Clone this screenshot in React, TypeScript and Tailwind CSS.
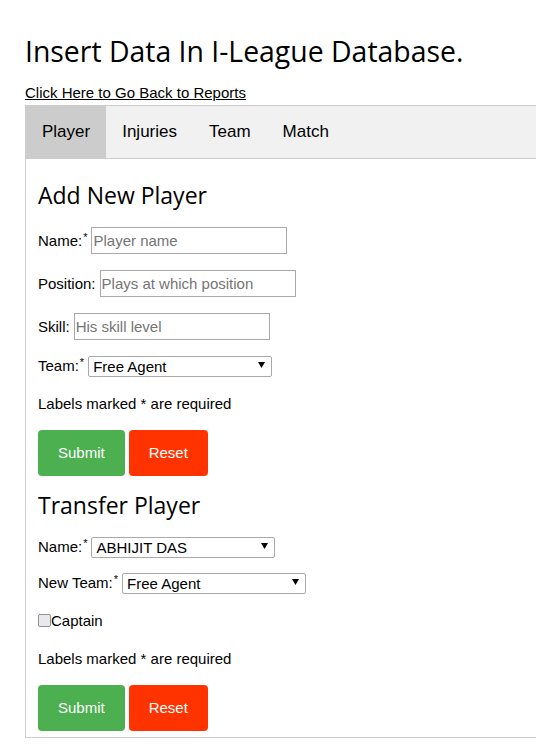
import React from "react";

const body = "font-['Liberation_Sans',Arial,sans-serif]";
const heading = "font-['Open_Sans','Noto_Sans',sans-serif]";

function Req() {
	return <sup className="ml-[1px] text-[11px]">*</sup>;
}

function Select({ value, width }: { value: string; width: string }) {
	return (
		<div className={`relative h-[21px] ${width}`}>
			<select
				defaultValue={value}
				className={`${body} h-full w-full appearance-none rounded-[2px] border border-[#a9a9a9] bg-white pl-[4px] text-[15px] leading-[17px] text-black outline-none`}
			>
				<option>{value}</option>
			</select>
			<svg
				className="pointer-events-none absolute right-[7px] top-[7px]"
				width="7"
				height="6"
				viewBox="0 0 7 6"
			>
				<polygon points="0,0 7,0 3.5,6" fill="#000" />
			</svg>
		</div>
	);
}

function TextRow({
	label,
	placeholder,
	required,
}: {
	label: string;
	placeholder: string;
	required?: boolean;
}) {
	return (
		<div className="mt-[16px] flex h-[27px] items-center first:mt-[18px]">
			<label className="text-[15px] leading-[17px]">
				{label}
				{required && <Req />}
			</label>
			<input
				placeholder={placeholder}
				className={`${body} ml-[4px] h-[27px] w-[196px] border border-[#a9a9a9] px-[1px] text-[15px] outline-none placeholder:text-[#757575]`}
			/>
		</div>
	);
}

function Buttons() {
	return (
		<div className="mt-[18px] flex gap-[4px]">
			<button className="h-[46px] rounded-[4px] bg-[#4caf50] px-[20px] text-[15px] text-white">
				Submit
			</button>
			<button className="h-[46px] rounded-[4px] bg-[#ff3300] px-[20px] text-[15px] text-white">
				Reset
			</button>
		</div>
	);
}

export default function App() {
	const tabs = ["Player", "Injuries", "Team", "Match"];

	return (
		<div className={`${body} min-h-[755px] w-full overflow-hidden bg-white pl-[25px] pt-[33px] text-black`}>
			<h1 className={`${heading} text-[28.4px] font-normal leading-[36px]`}>
				Insert Data In I-League Database.
			</h1>
			<a href="#" className="mt-[15px] block text-[15px] leading-[17px] underline">
				Click Here to Go Back to Reports
			</a>

			<div className="w-[560px]">
				{/* tabs */}
				<div className="mt-[4px] flex border border-[#cccccc] bg-[#f1f1f1]">
					{tabs.map((t, i) => (
						<button
							key={t}
							className={`h-[52px] px-[16px] text-[17px] ${i === 0 ? "bg-[#cccccc]" : ""}`}
						>
							{t}
						</button>
					))}
				</div>

				{/* tab content */}
				<div className="border border-t-0 border-[#cccccc] px-[12px] pb-[6px] pt-[6px]">
					<h3 className={`${heading} mt-[16px] text-[23px] font-normal leading-[28px]`}>
						Add New Player
					</h3>
					<div>
						<TextRow label="Name:" placeholder="Player name" required />
						<TextRow label="Position:" placeholder="Plays at which position" />
						<TextRow label="Skill:" placeholder="His skill level" />
					</div>
					<div className="mt-[15px] flex items-center">
						<label className="text-[15px] leading-[17px]">
							Team:
							<Req />
						</label>
						<div className="ml-[4px]">
							<Select value="Free Agent" width="w-[184px]" />
						</div>
					</div>
					<p className="mt-[19px] text-[15px] leading-[17px]">Labels marked * are required</p>
					<Buttons />

					<h3 className={`${heading} mt-[15px] text-[23px] font-normal leading-[28px]`}>
						Transfer Player
					</h3>
					<div className="mt-[17px] flex items-center">
						<label className="text-[15px] leading-[17px]">
							Name:
							<Req />
						</label>
						<div className="ml-[4px]">
							<Select value="ABHIJIT DAS" width="w-[184px]" />
						</div>
					</div>
					<div className="mt-[15px] flex items-center">
						<label className="text-[15px] leading-[17px]">
							New Team:
							<Req />
						</label>
						<div className="ml-[4px]">
							<Select value="Free Agent" width="w-[184px]" />
						</div>
					</div>
					<label className="mt-[19px] flex h-[17px] items-center text-[15px] leading-[17px]">
						<input
							type="checkbox"
							className="h-[13px] w-[13px] appearance-none rounded-[2px] border border-[#8f8f9d] bg-[#e9e9e9]"
						/>
						Captain
					</label>
					<p className="mt-[21px] text-[15px] leading-[17px]">Labels marked * are required</p>
					<Buttons />
				</div>
			</div>
		</div>
	);
}
